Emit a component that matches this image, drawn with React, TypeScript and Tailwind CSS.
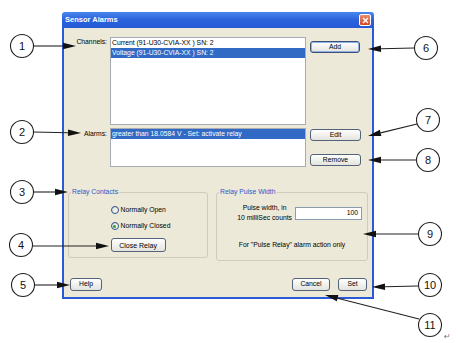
import React from "react";

type Callout = { n: string; cx: number; cy: number; from: [number, number]; tip: [number, number] };

const callouts: Callout[] = [
  { n: "1", cx: 22, cy: 46, from: [33, 46], tip: [76, 46] },
  { n: "2", cx: 22, cy: 132, from: [33, 132], tip: [81, 133] },
  { n: "3", cx: 22, cy: 192, from: [33, 192], tip: [68, 192] },
  { n: "4", cx: 21, cy: 245, from: [32, 246], tip: [109, 246] },
  { n: "5", cx: 23, cy: 285, from: [34, 285], tip: [70, 285] },
  { n: "6", cx: 426, cy: 48, from: [414, 48], tip: [368, 49] },
  { n: "7", cx: 428, cy: 120, from: [417, 124], tip: [368, 136] },
  { n: "8", cx: 428, cy: 160, from: [416, 160], tip: [368, 160] },
  { n: "9", cx: 430, cy: 234, from: [418, 234], tip: [363, 234] },
  { n: "10", cx: 430, cy: 285, from: [418, 286], tip: [372, 287] },
  { n: "11", cx: 430, cy: 325, from: [419, 319], tip: [325, 295] },
];

function Arrow({ from, tip }: { from: [number, number]; tip: [number, number] }) {
  const dx = tip[0] - from[0];
  const dy = tip[1] - from[1];
  const len = Math.hypot(dx, dy);
  const ux = dx / len;
  const uy = dy / len;
  const bx = tip[0] - ux * 13;
  const by = tip[1] - uy * 13;
  const px = -uy * 3.2;
  const py = ux * 3.2;
  return (
    <g>
      <line x1={from[0]} y1={from[1]} x2={bx} y2={by} stroke="#222" strokeWidth="1.1" />
      <polygon points={`${tip[0]},${tip[1]} ${bx + px},${by + py} ${bx - px},${by - py}`} fill="#111" />
    </g>
  );
}

function XpButton({ label, className = "", focused = false }: { label: string; className?: string; focused?: boolean }) {
  return (
    <div
      className={`flex items-center justify-center rounded-[3px] border bg-linear-to-b from-white to-[#e4e3dc] text-[6.8px] leading-none text-black ${
        focused ? "border-[#3d4f73] shadow-[inset_0_0_0_1px_#8fb0e8]" : "border-[#54637c]"
      } ${className}`}
    >
      {label}
    </div>
  );
}

function Radio({ label, checked = false }: { label: string; checked?: boolean }) {
  return (
    <div className="flex h-[10px] items-center gap-[2px]">
      <span className="flex h-[8px] w-[8px] items-center justify-center rounded-full border border-[#2a4f84] bg-linear-to-br from-[#dcdcd4] to-white">
        {checked && <span className="h-[3px] w-[3px] rounded-full bg-[#2aa02a]" />}
      </span>
      <span>{label}</span>
    </div>
  );
}

export default function App() {
  return (
    <div className="relative h-[343px] w-[458px] overflow-hidden bg-white font-['Liberation_Sans',Arial,sans-serif] text-[6.8px] text-black">
      <div className="ml-[62px] pt-[12px]">
        <div className="flex h-[287px] w-[312px] flex-col">
          {/* title bar */}
          <div className="flex h-[16px] items-center justify-between rounded-t-[3px] bg-linear-to-b from-[#4a86ee] via-[#2a62dc] to-[#245ad6] pl-[3px] pr-[3px]">
            <span className="text-[7.5px] font-bold text-white">Sensor Alarms</span>
            <span className="flex h-[12px] w-[12px] items-center justify-center rounded-[2px] border border-white bg-linear-to-b from-[#e98a6c] to-[#d4451f]">
              <svg width="7" height="7" viewBox="0 0 7 7">
                <path d="M1 1 L6 6 M6 1 L1 6" stroke="white" strokeWidth="1.4" />
              </svg>
            </span>
          </div>

          <div className="flex flex-1 flex-col border-x-2 border-b-2 border-[#2b5ad6] bg-[#ece9d8]">
            {/* channels */}
            <div className="mt-[9px] flex">
              <div className="w-[43px] text-right leading-[10px]">Channels:</div>
              <div className="ml-[3px] h-[88px] w-[196px] border border-[#a5acb5] bg-white">
                <div className="h-[10px] pl-[1px] leading-[10px]">Current (91-U30-CVIA-XX ) SN: 2</div>
                <div className="h-[10px] bg-[#316ac5] pl-[1px] leading-[10px] text-white">Voltage (91-U30-CVIA-XX ) SN: 2</div>
              </div>
              <XpButton label="Add" focused className="ml-[4px] mt-[4px] h-[12px] w-[50px]" />
            </div>

            {/* alarms */}
            <div className="mt-[3px] flex">
              <div className="w-[43px] pt-[1px] text-right leading-[10px]">Alarms:</div>
              <div className="ml-[3px] h-[39px] w-[196px] border border-[#a5acb5] bg-white">
                <div className="h-[10px] bg-[#316ac5] pl-[1px] leading-[10px] text-white">greater than 18.0584 V - Set: activate relay</div>
              </div>
              <div className="ml-[4px] flex flex-col">
                <XpButton label="Edit" className="mt-[1px] h-[12px] w-[51px]" />
                <XpButton label="Remove" className="mt-[13px] h-[12px] w-[51px]" />
              </div>
            </div>

            {/* groups */}
            <div className="ml-[4px] mt-[21px] flex items-start gap-[8px]">
              <fieldset className="h-[70px] w-[140px] rounded-[3px] border border-[#cfccbd]">
                <legend className="ml-[2px] px-[1px] leading-[8px] text-[#2c58c9]">Relay Contacts</legend>
                <div className="flex justify-center">
                  <div className="ml-[5px] flex flex-col items-start">
                    <div className="mt-[9px]">
                      <Radio label="Normally Open" />
                    </div>
                    <div className="mt-[6px]">
                      <Radio label="Normally Closed" checked />
                    </div>
                    <XpButton label="Close Relay" className="mt-[7px] h-[14px] w-[55px] text-[7px]" />
                  </div>
                </div>
              </fieldset>

              <fieldset className="h-[73px] w-[152px] rounded-[3px] border border-[#cfccbd]">
                <legend className="ml-[2px] px-[1px] leading-[8px] text-[#2c58c9]">Relay Pulse Width</legend>
                <div className="mt-[7px] flex items-center justify-end gap-[3px] pr-[5px]">
                  <div className="text-center leading-[10px]">
                    Pulse width, in
                    <br />
                    10 milliSec counts
                  </div>
                  <div className="flex h-[13px] w-[67px] items-center justify-end border border-[#8a9bb0] bg-white pr-[3px]">100</div>
                </div>
                <div className="mt-[17px] text-center leading-[10px]">For "Pulse Relay" alarm action only</div>
              </fieldset>
            </div>

            {/* bottom buttons */}
            <div className="mt-auto flex items-center pb-[6px] pl-[6px] pr-[5px]">
              <XpButton label="Help" className="h-[13px] w-[32px]" />
              <div className="ml-auto flex gap-[8px]">
                <XpButton label="Cancel" className="h-[13px] w-[38px]" />
                <XpButton label="Set" className="h-[13px] w-[29px]" />
              </div>
            </div>
          </div>
        </div>
      </div>

      {/* annotation layer */}
      <svg className="absolute left-0 top-0" width="458" height="343" viewBox="0 0 458 343">
        {callouts.map((c) => (
          <g key={c.n}>
            <Arrow from={c.from} tip={c.tip} />
            <circle cx={c.cx} cy={c.cy} r="11.5" fill="white" stroke="#222" strokeWidth="1.1" />
            <text
              x={c.cx}
              y={c.cy + 4}
              textAnchor="middle"
              fontFamily="Liberation Sans, Arial, sans-serif"
              fontSize="11"
              fill="#111"
            >
              {c.n}
            </text>
          </g>
        ))}
        <text x="444" y="339" fontFamily="DejaVu Sans, sans-serif" fontSize="8" fill="#777">
          ↵
        </text>
      </svg>
    </div>
  );
}
